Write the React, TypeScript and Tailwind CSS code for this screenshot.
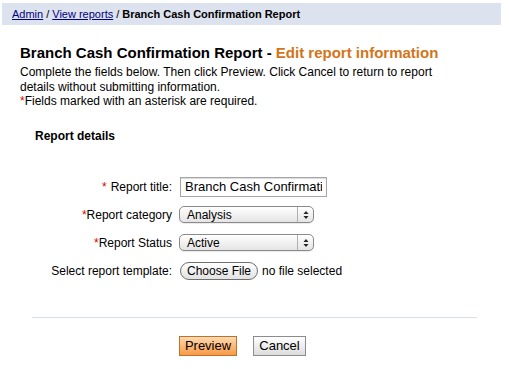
import React from "react";

function Req() {
  return <span className="text-[#e00000]">*</span>;
}

function FakeSelect({ value }: { value: string }) {
  return (
    <div className="flex h-[17px] w-[135px] items-stretch rounded-[5px] border border-[#8a8a8a] bg-gradient-to-b from-white to-[#e4e4e4] shadow-[0_1px_0_rgba(0,0,0,0.08)]">
      <span className="flex flex-1 items-center pl-[7px] text-[12px] leading-none text-black">{value}</span>
      <span className="flex w-[16px] items-center justify-center border-l border-[#b0b0b0]">
        <svg width="6" height="10" viewBox="0 0 6 10">
          <path d="M3 1 L5.5 4 L0.5 4 Z" fill="#222" />
          <path d="M3 9 L5.5 6 L0.5 6 Z" fill="#222" />
        </svg>
      </span>
    </div>
  );
}

export default function App() {
  return (
    <main className="min-h-[369px] w-[509px] bg-white font-['Liberation_Sans',Arial,sans-serif] text-black">
      <nav className="mx-[2px] mt-[3px] flex h-[22px] w-[499px] items-center bg-[#dde2ef] pl-[10px] pt-[1px] text-[11px]">
        <a className="text-[#000080] underline">Admin</a>
        <span className="px-[3px]">/</span>
        <a className="text-[#000080] underline">View reports</a>
        <span className="px-[3px]">/</span>
        <span className="font-bold">Branch Cash Confirmation Report</span>
      </nav>

      <div className="px-[20px]">
        <h1 className="mt-[19px] text-[15px] font-bold leading-[17px]">
          Branch Cash Confirmation Report - <span className="text-[#d4741a]">Edit report information</span>
        </h1>
        <p className="mt-[4px] max-w-[430px] text-[12px] leading-[14.5px]">
          Complete the fields below. Then click Preview. Click Cancel to return to report details without submitting information.
          <br />
          <Req />
          Fields marked with an asterisk are required.
        </p>

        <h2 className="mt-[20px] pl-[15px] text-[12px] font-bold leading-[14px]">Report details</h2>
      </div>

      <div className="mt-[30px] grid grid-cols-[172px_1fr] gap-x-[7px] text-[12px]">
        <div className="flex h-[28px] items-center justify-end">
          <Req />
          <span className="ml-[4px]">Report title:</span>
        </div>
        <div className="flex h-[28px] items-center">
          <input
            readOnly
            defaultValue="Branch Cash Confirmation Report"
            className="ml-[1px] h-[20px] w-[147px] border border-[#a5a5a5] bg-white px-[4px] text-[13px] text-black shadow-[inset_0_1px_1px_rgba(0,0,0,0.15)] outline-none"
          />
        </div>

        <div className="flex h-[28px] items-center justify-end">
          <Req />
          <span>Report category</span>
        </div>
        <div className="flex h-[28px] items-center">
          <FakeSelect value="Analysis" />
        </div>

        <div className="flex h-[28px] items-center justify-end">
          <Req />
          <span>Report Status</span>
        </div>
        <div className="flex h-[28px] items-center">
          <FakeSelect value="Active" />
        </div>

        <div className="flex h-[28px] items-center justify-end">Select report template:</div>
        <div className="flex h-[28px] items-center">
          <span className="ml-[1px] flex h-[18px] w-[78px] items-center justify-center rounded-full border border-[#6f6f6f] bg-gradient-to-b from-white to-[#e2e2e2] text-[12px]">
            Choose File
          </span>
          <span className="ml-[4px]">no file selected</span>
        </div>
      </div>

      <hr className="mx-[32px] mt-[32px] border-0 border-t border-[#d8dcec]" />

      <div className="mt-[18px] flex gap-[16px] pl-[179px] text-[13px]">
        <button className="flex h-[20px] w-[58px] items-center justify-center border border-[#b8732f] bg-gradient-to-b from-[#ffd9ae] to-[#f7993f]">
          Preview
        </button>
        <button className="flex h-[20px] w-[53px] items-center justify-center border border-[#8c8c8c] bg-gradient-to-b from-white to-[#dcdcdc]">
          Cancel
        </button>
      </div>
    </main>
  );
}
